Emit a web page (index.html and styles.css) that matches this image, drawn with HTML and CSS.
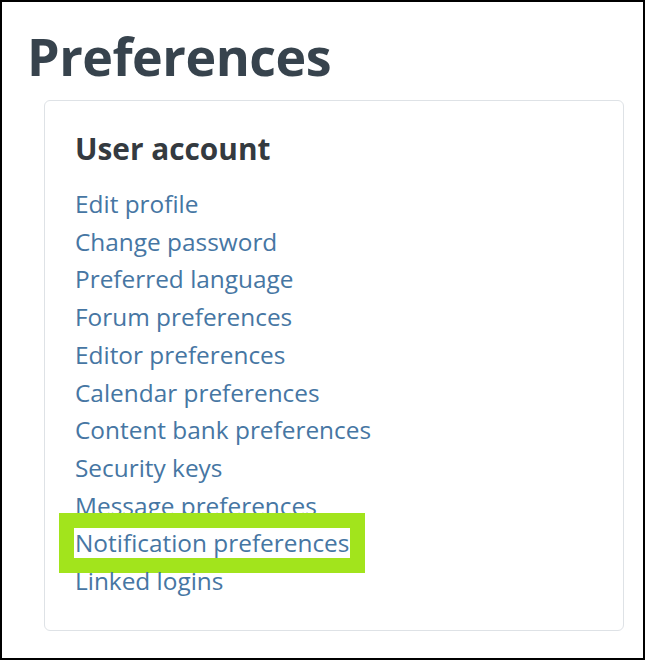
FILE: index.html
```html
<!DOCTYPE html>
<html lang="en">
<head>
<meta charset="utf-8">
<title>Preferences</title>
<link rel="stylesheet" href="styles.css">
</head>
<body>
<div class="frame">
  <h1 class="page-title">Preferences</h1>
  <section class="card">
    <h2 class="card-title">User account</h2>
    <ul class="links">
      <li><a href="#">Edit profile</a></li>
      <li><a href="#">Change password</a></li>
      <li><a href="#">Preferred language</a></li>
      <li><a href="#">Forum preferences</a></li>
      <li><a href="#">Editor preferences</a></li>
      <li><a href="#">Calendar preferences</a></li>
      <li><a href="#">Content bank preferences</a></li>
      <li><a href="#">Security keys</a></li>
      <li><a href="#">Message preferences</a></li>
      <li><a href="#" class="highlight">Notification preferences</a></li>
      <li><a href="#">Linked logins</a></li>
    </ul>
  </section>
</div>
</body>
</html>
```

FILE: styles.css
```css
* { box-sizing: border-box; }
html, body { margin: 0; padding: 0; background: #fff; }
body { font-family: "Open Sans", "Noto Sans", sans-serif; }
.frame {
  width: 645px;
  height: 660px;
  border: 2px solid #000;
  padding: 24px 0 0 0;
  overflow: hidden;
}
.page-title {
  margin: 0 0 14px 25px;
  font-size: 52px;
  line-height: 60px;
  font-weight: 700;
  color: #37434d;
  letter-spacing: -0.5px;
}
.card {
  margin-left: 42px;
  width: 580px;
  height: 531px;
  border: 1px solid #dee2e6;
  border-radius: 6px;
  padding: 28px 31px 0 30px;
}
.card-title {
  margin: 0 0 16px 0;
  font-size: 29.8px;
  line-height: 40px;
  font-weight: 700;
  color: #343a40;
}
.links {
  list-style: none;
  margin: 0;
  padding: 0;
}
.links li {
  font-size: 24.4px;
  line-height: 37.7px;
}
.links a {
  color: #4676a3;
  text-decoration: none;
}
.highlight {
  display: inline-block;
  height: 30px;
  line-height: 30px;
  margin-left: -1px;
  padding: 0 1px 0 1px;
  background: #fff;
  outline: 15px solid #a2e41c;
}
```
